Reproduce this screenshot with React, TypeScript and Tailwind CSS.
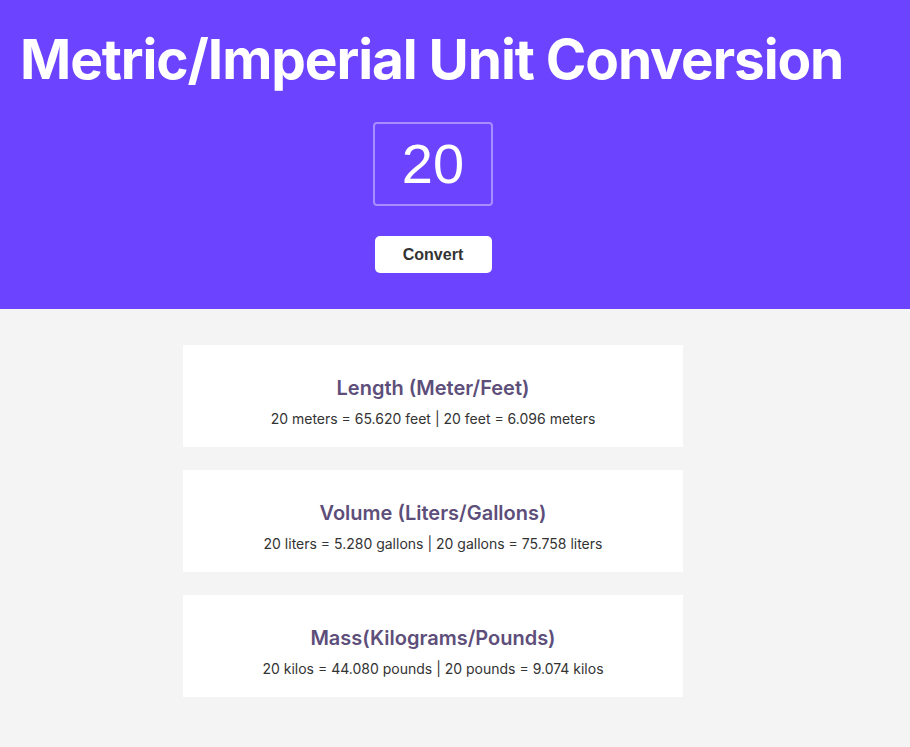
import React, { useState } from 'react';

const convert = (n: number) => [
    {
        title: 'Length (Meter/Feet)',
        left: `${n} meters = ${(n * 3.281).toFixed(3)} feet`,
        right: `${n} feet = ${(n / 3.281).toFixed(3)} meters`,
    },
    {
        title: 'Volume (Liters/Gallons)',
        left: `${n} liters = ${(n * 0.264).toFixed(3)} gallons`,
        right: `${n} gallons = ${(n / 0.264).toFixed(3)} liters`,
    },
    {
        title: 'Mass(Kilograms/Pounds)',
        left: `${n} kilos = ${(n * 2.204).toFixed(3)} pounds`,
        right: `${n} pounds = ${(n / 2.204).toFixed(3)} kilos`,
    },
];

export default function App() {
    const [value, setValue] = useState<string>('20');
    const [num, setNum] = useState<number>(20);

    const results = convert(num);

    return (
        <div className="min-h-[747px] bg-[#f4f4f4] font-['Inter',sans-serif]">
            <header className="bg-[#6c43ff] h-[309px]">
                <h1 className="pl-[20px] pt-[21px] text-[55px] leading-[76px] font-bold text-white tracking-[-0.02em] whitespace-nowrap">
                    Metric/Imperial Unit Conversion
                </h1>
                <div className="w-[866px] flex flex-col items-center">
                    <input
                        type="text"
                        value={value}
                        onChange={(e) => setValue(e.target.value)}
                        className="mt-[25px] w-[120px] h-[84px] bg-transparent border-2 border-white/40 rounded-[4px] text-center text-white text-[56px] font-['Liberation_Sans',sans-serif] outline-none"
                    />
                    <button
                        onClick={() => setNum(Number(value) || 0)}
                        className="mt-[30px] w-[117px] h-[37px] bg-white rounded-[5px] text-[16px] font-bold text-[#333] font-['Liberation_Sans',sans-serif]"
                    >
                        Convert
                    </button>
                </div>
            </header>
            <main className="w-[866px] flex flex-col items-center gap-[23px] pt-[36px]">
                {results.map((r) => (
                    <div key={r.title} className="w-[500px] h-[102px] bg-white flex flex-col items-center pt-[29px]">
                        <h2 className="text-[20px] leading-[28px] font-semibold text-[#5d4e7a]">{r.title}</h2>
                        <p className="mt-[7px] text-[14px] leading-[20px] text-[#333]">
                            {r.left} | {r.right}
                        </p>
                    </div>
                ))}
            </main>
        </div>
    );
}
